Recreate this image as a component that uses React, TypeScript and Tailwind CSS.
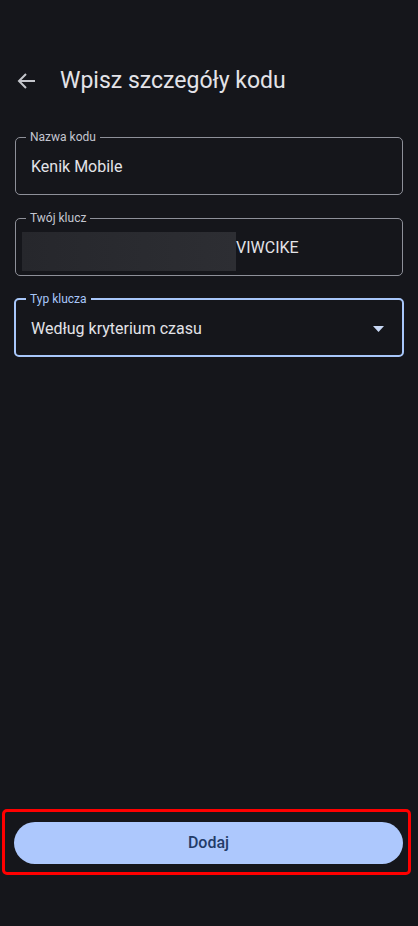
import React from "react";

const font = { fontFamily: "Roboto, 'Noto Sans', sans-serif" };

function Field({
    label,
    focused,
    children,
}: {
    label: string;
    focused?: boolean;
    children: React.ReactNode;
}) {
    return (
        <fieldset
            className={
                focused
                    ? "mx-[14px] rounded-[5px] border-2 border-[#a8c7fa] pb-[14px] pl-[15px] pr-[15px]"
                    : "mx-[15px] rounded-[5px] border border-[#8e9099] pb-[15px] pl-[15px] pr-[15px]"
            }
        >
            <legend
                className={
                    "ml-[-5px] px-1 text-[12px] leading-4 " +
                    (focused ? "text-[#a8c7fa]" : "text-[#c4c6d0]")
                }
            >
                {label}
            </legend>
            <div className="mt-[10px] flex h-6 items-center text-[16px] leading-6 text-[#e3e3e8]">
                {children}
            </div>
        </fieldset>
    );
}

export default function App() {
    return (
        <div style={font} className="flex h-[926px] w-full flex-col bg-[#15161b]">
            <div className="mt-[57px] flex h-12 items-center">
                <svg className="ml-[15px] h-6 w-6" viewBox="0 0 24 24" fill="none">
                    <path d="M20 12H4.5M11 5l-7 7 7 7" stroke="#c4c6cc" strokeWidth="2" />
                </svg>
                <h1 className="ml-[21px] text-[23px] text-[#e3e3e8]">Wpisz szczegóły kodu</h1>
            </div>

            <div className="mt-6 flex flex-col gap-[15px]">
                <Field label="Nazwa kodu">Kenik Mobile</Field>
                <Field label="Twój klucz">
                    <div className="-ml-[9px] -mt-[4px] h-[39px] w-[214px] shrink-0 self-start bg-gradient-to-r from-[#26272c] to-[#2d2e33]" />
                    <span>VIWCIKE</span>
                </Field>
                <Field label="Typ klucza" focused>
                    <span className="flex-1">Według kryterium czasu</span>
                    <svg className="mr-[3px] h-[6px] w-[11px]" viewBox="0 0 11 6">
                        <path d="M0 0h11L5.5 6z" fill="#c8d8f5" />
                    </svg>
                </Field>
            </div>

            <div className="mb-[51px] ml-[2px] mt-auto w-[409px] rounded-[5px] border-[3px] border-[#ff0000] pb-[8px] pl-[9px] pt-[10px]">
                <button className="flex h-[42px] w-[389px] items-center justify-center rounded-full bg-[#adc8fd] text-[16px] font-medium text-[#233c68]">
                    Dodaj
                </button>
            </div>
        </div>
    );
}
